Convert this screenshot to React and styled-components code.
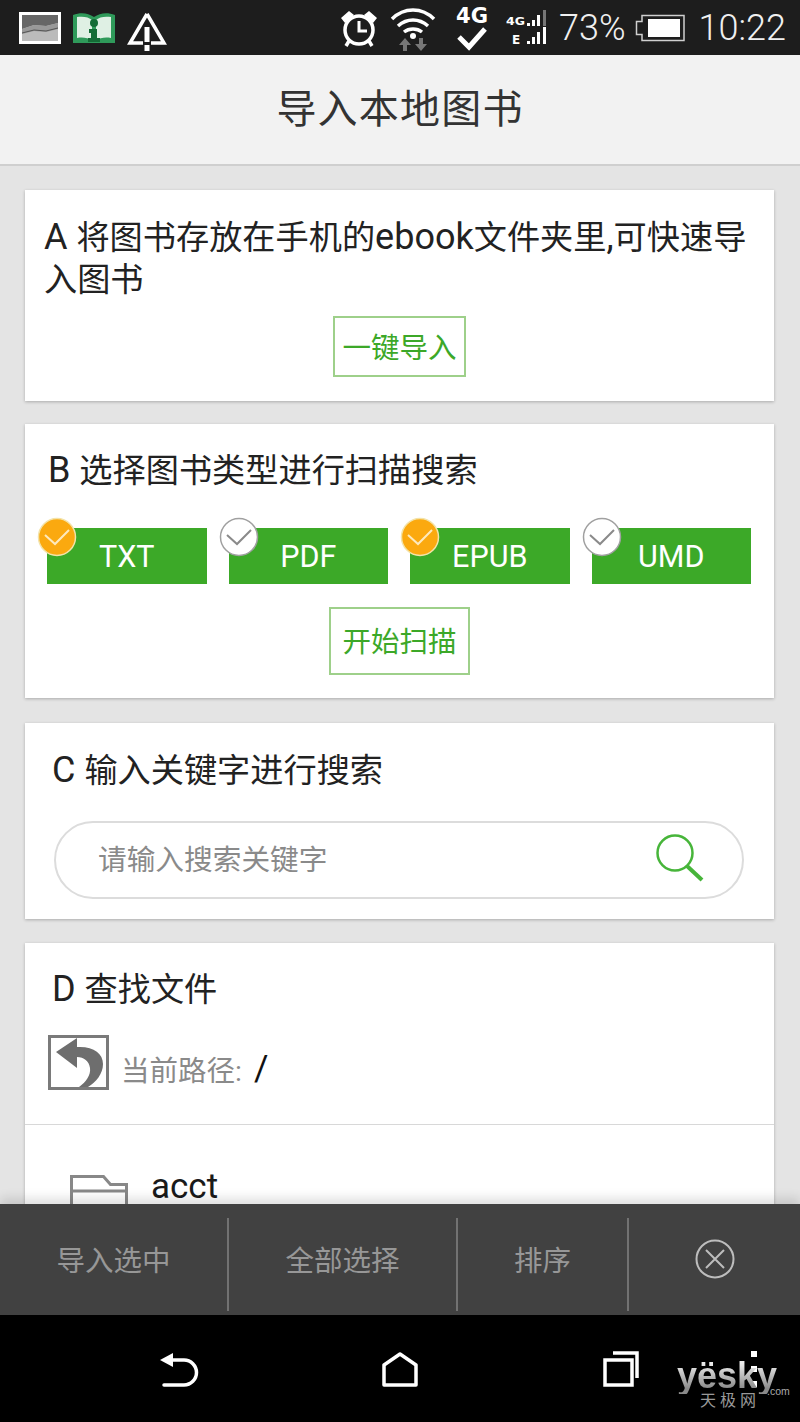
import React from "react";
import styled, { createGlobalStyle } from "styled-components";

const GlobalStyle = createGlobalStyle`
  html, body {
    margin: 0;
    padding: 0;
    background: #000;
  }
  * {
    box-sizing: border-box;
  }
`;

const Page = styled.div`
  width: 800px;
  height: 1422px;
  display: flex;
  flex-direction: column;
  overflow: hidden;
  position: relative;
  background: #e4e4e4;
  font-family: Roboto, "Noto Sans CJK SC", sans-serif;
  color: #222;
`;

const StatusBar = styled.div`
  height: 55px;
  flex: none;
  display: flex;
  align-items: center;
  padding: 0 14px 0 19px;
  background: #1d1d1d;
  color: #f0f0f0;
`;

const StatusGroup = styled.div`
  display: flex;
  align-items: center;
  gap: ${(p) => p.$gap}px;
  margin-left: ${(p) => (p.$right ? "auto" : "0")};
`;

const StatusText = styled.span`
  font-size: 36px;
  font-weight: 300;
  line-height: 55px;
  margin-top: 2px;
  margin-left: ${(p) => p.$left || 0}px;
`;

const Header = styled.div`
  height: 111px;
  flex: none;
  display: flex;
  align-items: center;
  justify-content: center;
  padding-bottom: 7px;
  background: #f2f2f2;
  border-bottom: 2px solid #cfcfcf;
  font-size: 40px;
  letter-spacing: 1.2px;
  color: #333;
`;

const Main = styled.div`
  flex: 1;
  min-height: 0;
  overflow: hidden;
  padding: 24px 26px 0 25px;
  display: flex;
  flex-direction: column;
`;

const Card = styled.section`
  flex: none;
  margin-top: ${(p) => p.$top || 0}px;
  background: #fff;
  box-shadow: 0 1px 3px rgba(0, 0, 0, 0.25);
  padding: ${(p) => p.$padding};
`;

const Heading = styled.div`
  font-size: 33.2px;
  line-height: 42px;
  padding-left: ${(p) => p.$indent}px;
  color: #222;
`;

const Latin = styled.span`
  font-size: 36px;
  line-height: 0;
`;

const Centered = styled.div`
  display: flex;
  justify-content: center;
  margin-top: ${(p) => p.$top}px;
`;

const OutlineButton = styled.div`
  width: ${(p) => p.$width}px;
  height: ${(p) => p.$height}px;
  display: flex;
  align-items: center;
  justify-content: center;
  padding-bottom: 3px;
  border: 2px solid #9ed08a;
  color: #3ca828;
  font-size: 28.5px;
`;

const ChipRow = styled.div`
  display: grid;
  grid-template-columns: repeat(4, 159.5px);
  column-gap: 22px;
  margin-top: 36px;
  padding-left: 22px;
`;

const Chip = styled.div`
  position: relative;
  height: 56px;
  display: flex;
  align-items: center;
  justify-content: center;
  background: #3ca928;
  color: #fff;
  font-size: 30.5px;
`;

const ChipBadge = styled.svg`
  position: absolute;
  left: -10px;
  top: -11px;
  width: 40px;
  height: 40px;
`;

const SearchBox = styled.div`
  height: 78px;
  margin: 29px 4px 0 3px;
  display: flex;
  align-items: center;
  justify-content: space-between;
  padding: 0 36px 2px 42px;
  border: 2px solid #dcdcdc;
  border-radius: 39px;
  color: #8a8a8a;
  font-size: 28.7px;
`;

const SearchHint = styled.span`
  margin-bottom: 3px;
`;

const PathRow = styled.div`
  display: flex;
  align-items: flex-start;
  gap: 12px;
  margin-top: 24px;
  padding: 0 0 23px 23px;
  border-bottom: 1px solid #d8d8d8;
  color: #8a8a8a;
  font-size: 28.5px;
`;

const PathText = styled.div`
  display: flex;
  align-items: center;
  gap: 12px;
  height: 66px;
`;

const PathSlash = styled.span`
  color: #111;
  font-size: 35px;
`;

const FileRow = styled.div`
  display: flex;
  gap: 23px;
  padding: 44px 0 0 45px;
  font-size: 35px;
  line-height: 36px;
  color: #1a1a1a;
`;

const FolderIcon = styled.svg`
  margin-top: 6px;
  flex: none;
`;

const Toolbar = styled.div`
  position: relative;
  height: 111px;
  flex: none;
  display: grid;
  grid-template-columns: 229px 229px 171px 1fr;
  background: #414141;
  box-shadow: 0 -6px 10px rgba(0, 0, 0, 0.12);
  color: #979797;
  font-size: 28.5px;
`;

const ToolCell = styled.div`
  display: flex;
  align-items: center;
  justify-content: center;
  margin-top: 14px;
  height: 93px;
  padding-bottom: 12px;
  border-right: ${(p) => (p.$last ? "0" : "2px solid #727272")};
`;

const NavBar = styled.div`
  position: relative;
  height: 107px;
  flex: none;
  display: flex;
  align-items: center;
  padding: 0 0 0 159px;
  gap: 181px;
  background: #000;
`;

const MenuDots = styled.div`
  display: flex;
  flex-direction: column;
  gap: 9px;
  margin-left: -71px;
`;

const Dot = styled.div`
  width: 6px;
  height: 6px;
  background: #fff;
`;

const Watermark = styled.div`
  position: absolute;
  left: 677px;
  top: 43px;
  width: 123px;
`;

const WatermarkName = styled.div`
  font-family: "Liberation Sans", sans-serif;
  font-weight: 700;
  font-size: 36px;
  line-height: 36px;
  background: linear-gradient(180deg, #ececec 15%, #8a8a8a 85%);
  -webkit-background-clip: text;
  background-clip: text;
  color: transparent;
`;

const WatermarkDomain = styled.span`
  position: absolute;
  left: 90px;
  top: 27px;
  font-family: "Liberation Sans", sans-serif;
  font-size: 10.5px;
  line-height: 13px;
  color: #aaa;
`;

const WatermarkCn = styled.div`
  margin: -2px 0 0 23px;
  font-size: 16px;
  line-height: 18px;
  letter-spacing: 4px;
  color: #999;
`;

const Badge = ({ on }) => (
  <ChipBadge viewBox="0 0 40 40">
    <circle
      cx="20"
      cy="20"
      r="18.5"
      fill={on ? "#fba90f" : "#fff"}
      stroke={on ? "#f3e3a8" : "#a0a0a0"}
      strokeWidth="1.5"
    />
    <path
      d="M8 18l10 9 14-14"
      fill="none"
      stroke={on ? "#fde9bd" : "#8a8a8a"}
      strokeWidth="2"
    />
  </ChipBadge>
);

const types = [
  { label: "TXT", on: true },
  { label: "PDF", on: false },
  { label: "EPUB", on: true },
  { label: "UMD", on: false },
];

const App = () => {
  return (
    <Page>
      <GlobalStyle />
      <StatusBar>
        <StatusGroup $gap={10}>
          <svg width="42" height="32" viewBox="0 0 42 32">
            <rect x="1.5" y="1.5" width="39" height="29" fill="#bbb" stroke="#fff" strokeWidth="3" />
            <path d="M3 3h36v8l-12 3-12-1-12 4z" fill="#666" />
            <path d="M3 17l12-4 12 1 12-3v6l-12 3-12-1-12 3z" fill="#999" />
            <path d="M3 21l12-3 12 1 12-3" fill="none" stroke="#555" />
          </svg>
          <svg width="46" height="34" viewBox="0 0 46 34">
            <path d="M2 4c8-3 15-2 21 2 6-4 13-5 21-2v28H2z" fill="#2f9a5a" />
            <path d="M6 6c6-1 12 0 15 3v20c-4-2-9-3-15-2zM40 6c-6-1-12 0-15 3v20c4-2 9-3 15-2z" fill="#dff0e4" />
            <circle cx="23" cy="12" r="4" fill="#146c36" />
            <path d="M18 18h8v9h3v4H17v-4h3v-5h-2z" fill="#146c36" />
          </svg>
          <svg width="40" height="42" viewBox="0 0 40 42" style={{ marginTop: 6 }}>
            <path d="M20 4L3 33h13M24 33h13L20 4" fill="none" stroke="#fff" strokeWidth="3.5" />
            <rect x="17.5" y="17" width="5" height="15" fill="#fff" />
            <rect x="17.5" y="35" width="5" height="6" fill="#fff" />
          </svg>
        </StatusGroup>
        <StatusGroup $right $gap={11}>
          <svg width="40" height="40" viewBox="0 0 40 40">
            <circle cx="20" cy="22" r="14" fill="none" stroke="#fff" strokeWidth="3.5" />
            <path d="M20 13v10h8" fill="none" stroke="#fff" strokeWidth="3" />
            <path d="M2 10l8-7 5 4-9 8zM38 10l-8-7-5 4 9 8z" fill="#fff" />
            <path d="M10 33l-3 5M30 33l3 5" stroke="#fff" strokeWidth="3.5" />
          </svg>
          <svg width="46" height="46" viewBox="0 0 46 46">
            <path d="M2 14c12-12 30-12 42 0M8 21c9-8 21-8 30 0M14 27c5-4 13-4 18 0" fill="none" stroke="#fff" strokeWidth="3.5" />
            <circle cx="23" cy="31" r="3" fill="#fff" />
            <path d="M15 33l-6 7h4v6h4v-6h4zM31 46l6-7h-4v-6h-4v6h-4z" fill="#777" />
          </svg>
          <svg width="32" height="46" viewBox="0 0 32 46" style={{ marginLeft: 9 }}>
            <text x="0" y="18" fontFamily="DejaVu Sans" fontWeight="700" fontSize="21" fill="#fff" textLength="32" lengthAdjust="spacingAndGlyphs">4G</text>
            <path d="M3 32l10 10L29 24" fill="none" stroke="#fff" strokeWidth="5" />
          </svg>
          <svg width="42" height="36" viewBox="0 0 42 36" style={{ marginLeft: 7 }}>
            <text x="0" y="15" fontFamily="DejaVu Sans" fontWeight="700" fontSize="11" fill="#fff" textLength="19" lengthAdjust="spacingAndGlyphs">4G</text>
            <rect x="21" y="13" width="3" height="3" fill="#fff" />
            <rect x="26" y="10" width="3" height="6" fill="#fff" />
            <rect x="31" y="5" width="3" height="11" fill="#fff" />
            <rect x="37" y="0" width="3" height="16" fill="#777" />
            <text x="6" y="34" fontFamily="DejaVu Sans" fontWeight="700" fontSize="12" fill="#fff">E</text>
            <rect x="21" y="31" width="3" height="3" fill="#fff" />
            <rect x="26" y="27" width="3" height="7" fill="#fff" />
            <rect x="31" y="22" width="3" height="12" fill="#fff" />
            <rect x="37" y="17" width="3" height="17" fill="#fff" />
          </svg>
          <StatusText>73%</StatusText>
          <svg width="50" height="28" viewBox="0 0 50 28" style={{ marginLeft: -2 }}>
            <path d="M7 1.5h42v25H7v-6H1.5v-13H7z" fill="none" stroke="#cfcfcf" strokeWidth="1.5" />
            <rect x="13" y="5" width="32" height="18" fill="#fff" />
          </svg>
          <StatusText $left={3}>10:22</StatusText>
        </StatusGroup>
      </StatusBar>

      <Header>导入本地图书</Header>

      <Main>
        <Card $padding="27px 0 24px 0">
          <Heading $indent={19}>
            <Latin>A </Latin>将图书存放在手机的<Latin>ebook</Latin>文件夹里<Latin>,</Latin>可快速导
            <br />
            入图书
          </Heading>
          <Centered $top={15}>
            <OutlineButton $width={133} $height={61}>一键导入</OutlineButton>
          </Centered>
        </Card>

        <Card $top={23} $padding="26px 0 23px 0">
          <Heading $indent={23}>
            <Latin>B </Latin>选择图书类型进行扫描搜索
          </Heading>
          <ChipRow>
            {types.map((t) => (
              <Chip key={t.label}>
                <Badge on={t.on} />
                {t.label}
              </Chip>
            ))}
          </ChipRow>
          <Centered $top={23}>
            <OutlineButton $width={141} $height={68}>开始扫描</OutlineButton>
          </Centered>
        </Card>

        <Card $top={25} $padding="27px 26px 20px 26px">
          <Heading $indent={1}>
            <Latin>C </Latin>输入关键字进行搜索
          </Heading>
          <SearchBox>
            <SearchHint>请输入搜索关键字</SearchHint>
            <svg width="52" height="52" viewBox="0 0 52 52">
              <circle cx="21" cy="20" r="17.5" fill="none" stroke="#47b53a" strokeWidth="2.5" />
              <path d="M33 33l15 14" stroke="#47b53a" strokeWidth="4" />
            </svg>
          </SearchBox>
        </Card>

        <Card $top={24} $padding="26px 0 0 0">
          <Heading $indent={27}>
            <Latin>D </Latin>查找文件
          </Heading>
          <PathRow>
            <svg width="61" height="55" viewBox="0 0 61 55" style={{ flex: "none" }}>
              <rect x="1.5" y="1.5" width="58" height="52" fill="#fff" stroke="#7a7a7a" strokeWidth="3" />
              <path d="M8 17L29 3v9c16-1 26 6 26 17 0 10-7 18-15 23h-9c7-5 12-12 11-19-1-7-6-11-13-11v11z" fill="#6e6e6e" />
            </svg>
            <PathText>
              当前路径:
              <PathSlash>/</PathSlash>
            </PathText>
          </PathRow>
          <FileRow>
            <FolderIcon width="58" height="60" viewBox="0 0 58 60">
              <path d="M1.5 40V1.5h32l7 8h16V40M1.5 16h55" fill="none" stroke="#888" strokeWidth="3" />
            </FolderIcon>
            acct
          </FileRow>
        </Card>
      </Main>

      <Toolbar>
        <ToolCell>导入选中</ToolCell>
        <ToolCell>全部选择</ToolCell>
        <ToolCell>排序</ToolCell>
        <ToolCell $last>
          <svg width="42" height="42" viewBox="0 0 42 42">
            <circle cx="21" cy="21" r="18.5" fill="none" stroke="#bdbdbd" strokeWidth="2" />
            <path d="M12 12l18 18M30 12L12 30" stroke="#bdbdbd" strokeWidth="2" />
          </svg>
        </ToolCell>
      </Toolbar>

      <NavBar>
        <svg width="40" height="36" viewBox="0 0 40 36">
          <path d="M10 9h15a12 12 0 0 1 0 25H5" fill="none" stroke="#fff" strokeWidth="3.5" strokeLinecap="round" />
          <path d="M1 9l13-7v14z" fill="#fff" />
        </svg>
        <svg width="40" height="36" viewBox="0 0 40 36">
          <path d="M20 3L36 14v20H4V14z" fill="none" stroke="#fff" strokeWidth="3.5" strokeLinejoin="round" />
        </svg>
        <svg width="40" height="36" viewBox="0 0 40 36">
          <rect x="4" y="9" width="27" height="25" fill="none" stroke="#fff" strokeWidth="3.5" />
          <path d="M12 2h24v25" fill="none" stroke="#fff" strokeWidth="3.5" />
        </svg>
        <MenuDots>
          <Dot />
          <Dot />
          <Dot />
        </MenuDots>
        <Watermark>
          <WatermarkName>yësky</WatermarkName>
          <WatermarkDomain>.com</WatermarkDomain>
          <WatermarkCn>天极网</WatermarkCn>
        </Watermark>
      </NavBar>
    </Page>
  );
};

export default App;
